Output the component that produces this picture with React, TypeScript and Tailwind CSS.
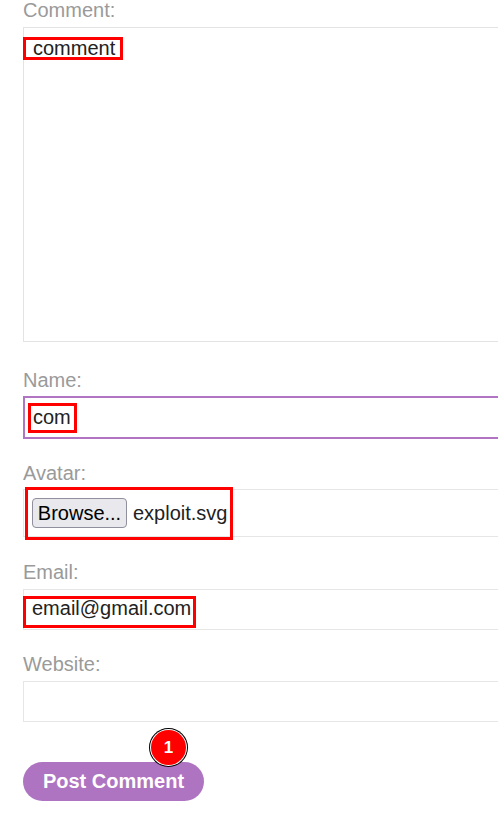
import type { ReactNode } from "react";

function Field({ label, children, gap = "gap-[4px]" }: { label: string; children: ReactNode; gap?: string }) {
  return (
    <div className={`flex flex-col ${gap}`}>
      <div className="h-[23px] text-[#9a9a9a]">{label}</div>
      {children}
    </div>
  );
}

export default function App() {
  return (
    <div className="relative flex h-[814px] w-[498px] flex-col gap-[23px] overflow-hidden bg-white pl-[23px] text-[20px] leading-[23px] text-[#222]" style={{ fontFamily: '"Liberation Sans", Arial, sans-serif' }}>
      <div className="-mt-px mb-[4px]">
        <Field label="Comment:" gap="gap-[5px]">
          <div className="relative h-[315px] w-[520px] shrink-0 border border-[#e3e3e3] pl-[9px] pt-[9px]">
            comment
            <div className="absolute left-[-1px] top-[9px] h-[23px] w-[100px] border-[3px] border-[#ff0000]" />
          </div>
        </Field>
      </div>

      <Field label="Name:">
        <div className="relative h-[43px] w-[520px] shrink-0 border-2 border-[#b074c2] pl-[8px] pt-[8px]">
          com
          <div className="absolute left-[3px] top-[5px] h-[30px] w-[49px] border-[3px] border-[#ff0000]" />
        </div>
      </Field>

      <Field label="Avatar:">
        <div className="relative flex h-[48px] w-[520px] shrink-0 items-center gap-[6px] border border-[#e6e6e6] pl-[8px]">
          <div className="flex h-[30px] w-[95px] items-center justify-center rounded-[4px] border border-[#8f8f9d] bg-[#e9e9ed] text-black">
            Browse...
          </div>
          <span>exploit.svg</span>
          <div className="absolute left-[1px] top-[-3px] h-[53px] w-[208px] border-[3px] border-[#ff0000]" />
        </div>
      </Field>

      <div className="mt-px">
        <Field label="Email:" gap="gap-[5px]">
          <div className="relative h-[41px] w-[520px] shrink-0 border border-[#e6e6e6] pl-[8px] pt-[7px]">
            email@gmail.com
            <div className="absolute left-[-1px] top-[6px] h-[32px] w-[173px] border-[3px] border-[#ff0000]" />
          </div>
        </Field>
      </div>

      <Field label="Website:" gap="gap-[5px]">
        <div className="h-[41px] w-[520px] shrink-0 border border-[#e6e6e6]" />
      </Field>

      <div className="relative mt-[17px] w-[181px]">
        <button className="flex h-[39px] w-[181px] items-center justify-center rounded-full bg-[#ae74c1] font-bold text-white">
          Post Comment
        </button>
        <div className="absolute left-[126px] top-[-34px] h-[39px] w-[39px] rounded-full bg-black p-px">
          <div className="h-full w-full rounded-full bg-white p-px">
            <div className="flex h-full w-full items-center justify-center rounded-full bg-[#ff0000] text-[17px] font-bold text-white">
              1
            </div>
          </div>
        </div>
      </div>
    </div>
  );
}
